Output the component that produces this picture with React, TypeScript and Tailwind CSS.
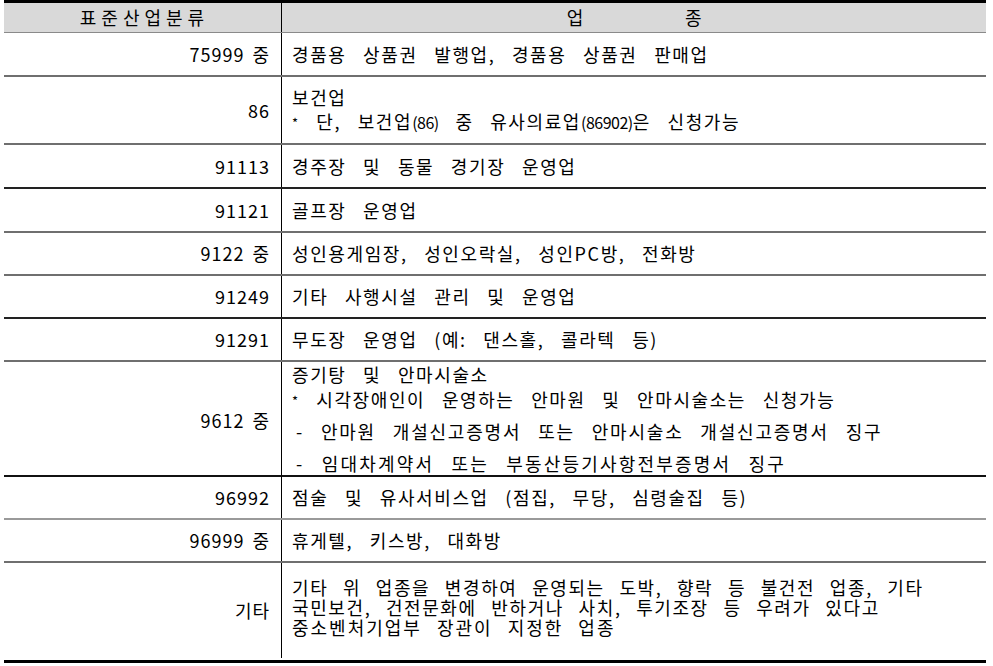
import React from "react"

type Row = {
  code: string
  h: string
  line: string
  body: React.ReactNode
}

const Star = () => <span className="text-[13px] relative top-[-1px]">*</span>

const rows: Row[] = [
  { code: "75999 중", h: "h-[44px]", line: "border-[#6f6f6f]", body: "경품용 상품권 발행업, 경품용 상품권 판매업" },
  {
    code: "86",
    h: "h-[68px]",
    line: "border-[#6f6f6f]",
    body: (
      <div className="flex flex-col leading-[24px]">
        <span>보건업</span>
        <span>
          <Star /> 단, 보건업<span className="text-[16px] tracking-[-0.5px]">(86)</span> 중 유사의료업
          <span className="text-[16px] tracking-[-0.5px]">(86902)</span>은 신청가능
        </span>
      </div>
    ),
  },
  { code: "91113", h: "h-[44px]", line: "border-[#222]", body: "경주장 및 동물 경기장 운영업" },
  { code: "91121", h: "h-[44px]", line: "border-[#6f6f6f]", body: "골프장 운영업" },
  { code: "9122 중", h: "h-[43px]", line: "border-[#6f6f6f]", body: "성인용게임장, 성인오락실, 성인PC방, 전화방" },
  { code: "91249", h: "h-[43px]", line: "border-[#222]", body: "기타 사행시설 관리 및 운영업" },
  { code: "91291", h: "h-[43px]", line: "border-[#6f6f6f]", body: "무도장 운영업 (예: 댄스홀, 콜라텍 등)" },
  {
    code: "9612 중",
    h: "h-[115px]",
    line: "border-[#111]",
    body: (
      <div className="flex flex-col">
        <span className="leading-[24px]">증기탕 및 안마시술소</span>
        <span className="leading-[26px]">
          <Star /> 시각장애인이 운영하는 안마원 및 안마시술소는 신청가능
        </span>
        <span className="leading-[32px] pl-[4px] tracking-[1.8px]">
          - 안마원 개설신고증명서 또는 안마시술소 개설신고증명서 징구
        </span>
        <span className="leading-[32px] pl-[4px] tracking-[2.2px]">- 임대차계약서 또는 부동산등기사항전부증명서 징구</span>
      </div>
    ),
  },
  { code: "96992", h: "h-[43px]", line: "border-[#9a9a9a]", body: "점술 및 유사서비스업 (점집, 무당, 심령술집 등)" },
  { code: "96999 중", h: "h-[43px]", line: "border-[#6f6f6f]", body: "휴게텔, 키스방, 대화방" },
  {
    code: "기타",
    h: "h-[97px]",
    line: "border-transparent",
    body: (
      <div className="flex flex-col leading-[20px] pb-[8px] [word-spacing:9px]">
        <span>기타 위 업종을 변경하여 운영되는 도박, 향락 등 불건전 업종, 기타</span>
        <span>국민보건, 건전문화에 반하거나 사치, 투기조장 등 우려가 있다고</span>
        <span className="tracking-[2px]">중소벤처기업부 장관이 지정한 업종</span>
      </div>
    ),
  },
]

export default function App() {
  return (
    <div className="w-[993px] h-[666px] bg-white pl-[4px] font-['Noto_Sans_CJK_KR',sans-serif] text-[18px] text-black tracking-[1.6px] [word-spacing:11px]">
      <div className="w-[982px] border-t-[3px] border-b-[3px] border-black">
        <div className="grid grid-cols-[278px_1fr] h-[30px] bg-[#d9d9d9] border-b border-[#8a8a8a]">
          <div className="flex items-center justify-center border-r border-black tracking-[5px] pl-[4px]">
            표준산업분류
          </div>
          <div className="flex items-center justify-center gap-[100px] pl-[2px]">
            <span>업</span>
            <span>종</span>
          </div>
        </div>
        {rows.map((r) => (
          <div key={r.code} className={`grid grid-cols-[278px_1fr] ${r.h} border-b-2 ${r.line}`}>
            <div className="flex items-center justify-end pr-[11px] border-r border-black tracking-[1px] [word-spacing:3px]">
              {r.code}
            </div>
            <div className="flex items-center pl-[10px]">{r.body}</div>
          </div>
        ))}
      </div>
    </div>
  )
}
